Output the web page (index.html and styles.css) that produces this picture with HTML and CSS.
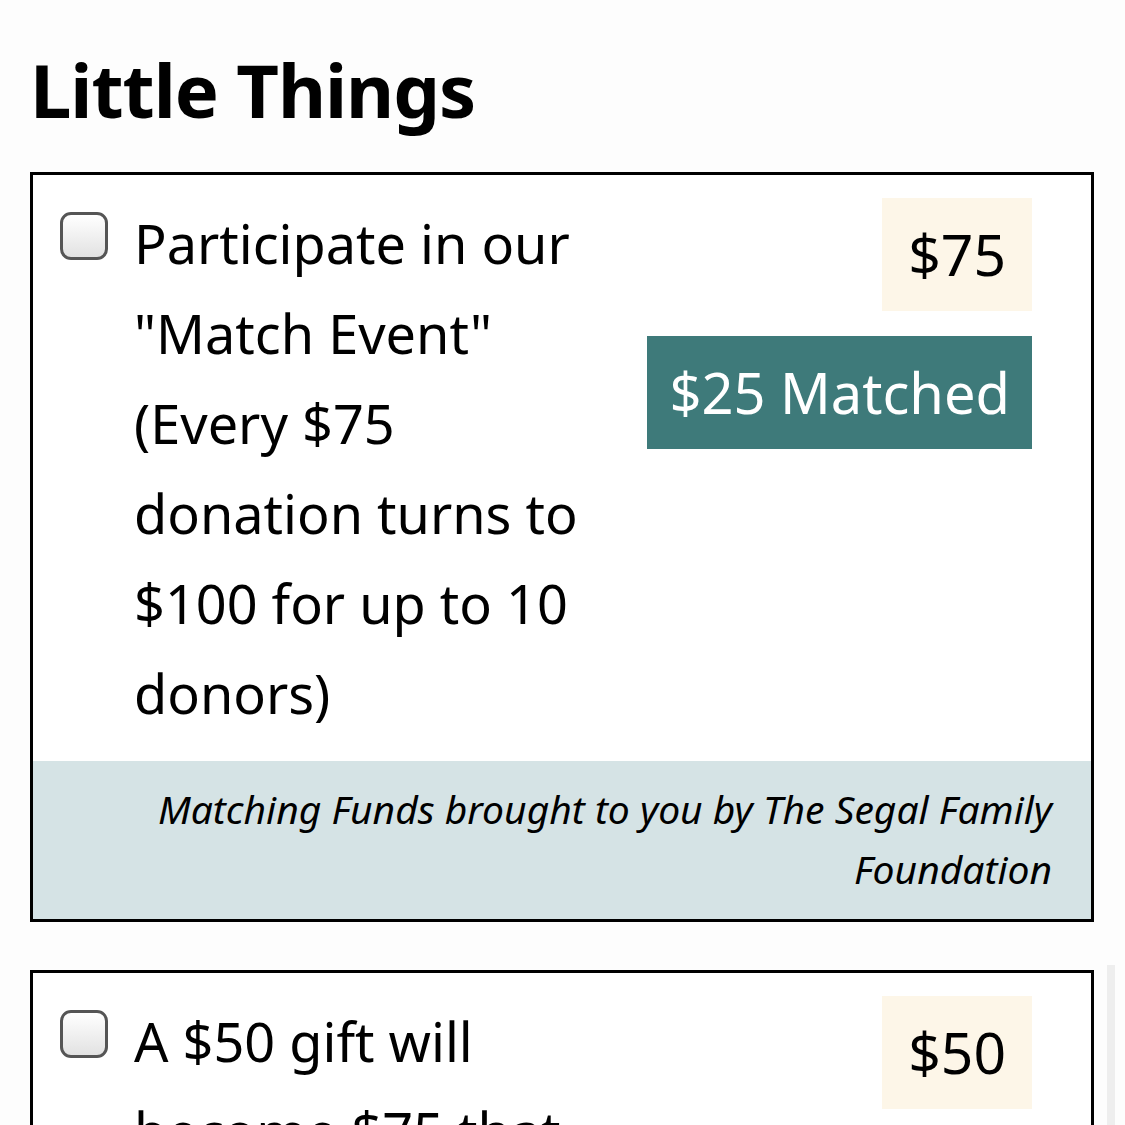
FILE: index.html
```html
<!DOCTYPE html>
<html>
<head>
<meta charset="utf-8">
<link rel="stylesheet" href="styles.css">
</head>
<body>
<main class="page">
  <h1 class="title">Little Things</h1>
  <section class="card">
    <div class="card-body">
      <label class="item">
        <span class="checkbox"></span>
        <span class="label-text">Participate in our "Match Event" (Every $75 donation turns to $100 for up to 10 donors)</span>
      </label>
      <div class="prices">
        <span class="price">$75</span>
        <span class="matched">$25 Matched</span>
      </div>
    </div>
    <div class="card-footer">
      <p class="sponsor">Matching Funds brought to you by The Segal Family Foundation</p>
    </div>
  </section>
  <section class="card card-second">
    <div class="card-body">
      <label class="item">
        <span class="checkbox"></span>
        <span class="label-text">A $50 gift will become $75 that can help a family</span>
      </label>
      <div class="prices">
        <span class="price">$50</span>
      </div>
    </div>
  </section>
</main>
<div class="scrollbar"></div>
</body>
</html>
```
FILE: styles.css
```css
html, body {
  margin: 0;
  padding: 0;
  background: #fdfdfd;
  height: 100%;
  overflow: hidden;
}
body {
  font-family: "Noto Sans", "Open Sans", sans-serif;
  color: #000;
}
.page {
  padding: 42px 31px 0 30px;
  width: 1064px;
}
.title {
  margin: 0 0 34px 0;
  font-size: 74px;
  font-weight: 700;
  line-height: 96px;
  letter-spacing: -1px;
}
.card {
  border: 3px solid #000;
  background: #fff;
}
.card-second {
  margin-top: 48px;
}
.card-body {
  display: flex;
  justify-content: space-between;
  align-items: flex-start;
  padding: 23px 59px 23px 27px;
}
.item {
  display: flex;
  align-items: flex-start;
  gap: 26px;
}
.checkbox {
  flex: none;
  margin-top: 14px;
  border: 3px solid #555;
  border-radius: 11px;
  background: linear-gradient(#fff, #e2e2e2);
  box-sizing: content-box;
  width: 42px;
  height: 42px;
}
.label-text {
  width: 475px;
  font-size: 54px;
  line-height: 90px;
}
.prices {
  display: flex;
  flex-direction: column;
  align-items: flex-end;
  gap: 25px;
}
.price {
  background: #fdf6e8;
  padding: 0 26px;
  height: 113px;
  line-height: 113px;
  font-size: 57px;
}
.matched {
  background: #3e7a7a;
  color: #fff;
  padding: 0 22px;
  height: 113px;
  line-height: 113px;
  font-size: 56px;
}
.card-footer {
  background: #d5e3e5;
  padding: 18px 39px 20px 60px;
}
.sponsor {
  margin: 0;
  text-align: right;
  font-style: italic;
  font-size: 39px;
  line-height: 60px;
}
.scrollbar {
  position: absolute;
  left: 1107px;
  top: 965px;
  width: 8px;
  height: 160px;
  background: #eeeeee;
}
```
